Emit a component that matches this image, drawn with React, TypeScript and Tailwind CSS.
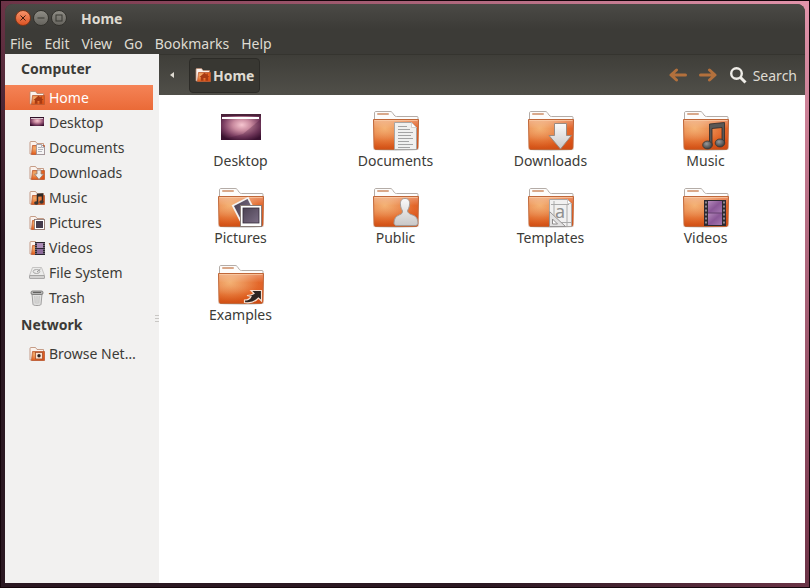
import type { ReactNode } from "react"

type Kind =
  | "home"
  | "desktop"
  | "documents"
  | "downloads"
  | "music"
  | "pictures"
  | "videos"
  | "public"
  | "templates"
  | "examples"
  | "filesystem"
  | "trash"
  | "network"

const menus = ["File", "Edit", "View", "Go", "Bookmarks", "Help"]

const computer: { label: string; kind: Kind }[] = [
  { label: "Home", kind: "home" },
  { label: "Desktop", kind: "desktop" },
  { label: "Documents", kind: "documents" },
  { label: "Downloads", kind: "downloads" },
  { label: "Music", kind: "music" },
  { label: "Pictures", kind: "pictures" },
  { label: "Videos", kind: "videos" },
  { label: "File System", kind: "filesystem" },
  { label: "Trash", kind: "trash" },
]

const network: { label: string; kind: Kind }[] = [{ label: "Browse Net…", kind: "network" }]

const files: { label: string; kind: Kind }[] = [
  { label: "Desktop", kind: "desktop" },
  { label: "Documents", kind: "documents" },
  { label: "Downloads", kind: "downloads" },
  { label: "Music", kind: "music" },
  { label: "Pictures", kind: "pictures" },
  { label: "Public", kind: "public" },
  { label: "Templates", kind: "templates" },
  { label: "Videos", kind: "videos" },
  { label: "Examples", kind: "examples" },
]

// Gradients shared by every icon on the page
function Gradients() {
  return (
    <svg className="absolute size-0" aria-hidden="true">
      <defs>
        <radialGradient id="folder" cx="0.25" cy="0.3" r="0.85">
          <stop offset="0" stopColor="#f3ad6c" />
          <stop offset="0.4" stopColor="#ea8748" />
          <stop offset="0.75" stopColor="#e2601f" />
          <stop offset="1" stopColor="#dc5218" />
        </radialGradient>
        <linearGradient id="shine" x1="0" y1="0" x2="0" y2="1">
          <stop offset="0" stopColor="#fff" stopOpacity="0.35" />
          <stop offset="0.3" stopColor="#fff" stopOpacity="0.05" />
          <stop offset="0.7" stopColor="#d04a10" stopOpacity="0.15" />
          <stop offset="1" stopColor="#b8400e" stopOpacity="0.4" />
        </linearGradient>
        <linearGradient id="silver" x1="0" y1="0" x2="0" y2="1">
          <stop offset="0" stopColor="#fafafa" />
          <stop offset="1" stopColor="#c9c8c8" />
        </linearGradient>
        <linearGradient id="photo" x1="0" y1="0" x2="1" y2="1">
          <stop offset="0" stopColor="#4b4152" />
          <stop offset="1" stopColor="#7c6e86" />
        </linearGradient>
        <linearGradient id="film" x1="0" y1="0" x2="1" y2="1">
          <stop offset="0" stopColor="#b58abb" />
          <stop offset="0.5" stopColor="#8a5797" />
          <stop offset="1" stopColor="#a578b0" />
        </linearGradient>
        <radialGradient id="note" cx="0.4" cy="0.35" r="0.6">
          <stop offset="0" stopColor="#999" />
          <stop offset="1" stopColor="#444" />
        </radialGradient>
        <radialGradient id="wallpaper" cx="0.52" cy="0.42" r="0.65">
          <stop offset="0" stopColor="#f6c6d0" />
          <stop offset="0.35" stopColor="#c98a9f" />
          <stop offset="0.7" stopColor="#7d4063" />
          <stop offset="1" stopColor="#3a122f" />
        </radialGradient>
      </defs>
    </svg>
  )
}

function Emblem({ kind }: { kind: Kind }) {
  switch (kind) {
    case "documents":
      return (
        <g>
          <path d="M22.500 15.500h17l5 5v22h-22z" fill="#f0f0ef" stroke="#a8a5a3" />
          <path d="M39.500 15.500v5h5z" fill="#fff" stroke="#c4c1bf" strokeWidth="0.700" />
          <path
            d="M26 19.500h9M26 22.500h12M26 25.500h15M26 28.500h13M26 31.500h15M26 34.500h11M26 37.500h15M26 40.500h12"
            stroke="#a3a3a3"
          />
        </g>
      )
    case "downloads":
      return (
        <path
          d="M27.500 16.500h12v12h5L33.500 42 22 28.500h5.500z"
          fill="url(#silver)"
          stroke="#9b8a80"
          strokeLinejoin="round"
        />
      )
    case "music":
      return (
        <g>
          <path
            d="M27.500 17l15-1.500v20.500h-2.500V20.500l-10 1v17h-2.500z"
            fill="#5a5755"
            stroke="#2e2a28"
            strokeWidth="0.800"
            strokeLinejoin="round"
          />
          <ellipse cx="25.500" cy="38" rx="4.800" ry="4" fill="url(#note)" stroke="#3a3634" strokeWidth="0.800" />
          <ellipse cx="38" cy="36" rx="4.800" ry="4" fill="url(#note)" stroke="#3a3634" strokeWidth="0.800" />
        </g>
      )
    case "pictures":
      return (
        <g>
          <rect
            x="19"
            y="17"
            width="17"
            height="17"
            fill="url(#photo)"
            stroke="#f4f2f1"
            strokeWidth="1.800"
            transform="rotate(-27 27 26)"
          />
          <rect x="23.500" y="21.500" width="21" height="21" fill="#fff" stroke="#8a7d78" />
          <rect x="26" y="24" width="16" height="15" fill="url(#photo)" stroke="#352c3a" strokeWidth="0.800" />
        </g>
      )
    case "public":
      return (
        <path
          d="M33 14.500c4 0 5 3 4.500 6.500-.3 3-1.500 4-2 6 .5 2 2 3 5 4 4 1.300 5 3.500 5.500 8 0 1.300-1 2-2 2.500H24c-1.500-.5-2-1.300-2-2.500.3-4.500 1.500-6.500 5-8 3-1 3.500-2 3.500-4-.8-2-1.800-3-2-6-.4-3.500.7-6.500 4.500-6.500z"
          fill="url(#silver)"
          stroke="#a29b98"
        />
      )
    case "templates":
      return (
        <g>
          <path d="M22.500 15.500h18l4 4v23h-22z" fill="#f1f0f0" stroke="#aaa6a4" />
          <path d="M40.500 15.500v4h4z" fill="#fff" stroke="#b9b5b3" strokeWidth="0.700" />
          <path d="M27 17v22M40 20v22M24 20.500h18M27 38.500h17" stroke="#aaa" />
          <path d="M22.500 27.500v15h16z" fill="#e2e1e1" stroke="#979494" />
          <path d="M25.500 35v5h5z" fill="#fff" stroke="#8e8b8b" />
          <text x="28" y="34" fontSize="18" fontFamily="Noto Sans" fill="#8e8e8e">
            a
          </text>
        </g>
      )
    case "videos":
      return (
        <g>
          <rect x="22" y="16" width="22" height="26" fill="#2d2930" />
          <rect x="26" y="17" width="14" height="12" fill="url(#film)" />
          <rect x="26" y="29" width="14" height="12" fill="url(#film)" />
          <path d="M26 29h14" stroke="#64406f" />
          <path d="M24 17.500v24M42 17.500v24" stroke="#aea7b0" strokeWidth="1.500" strokeDasharray="2 2" />
        </g>
      )
    case "examples":
      return (
        <path
          d="M34 29.500h10.500V40l-3-3c-4 4.500-8 5.500-14 4.500v-2.500c4 0 5.500-1 6.500-3.500l-4-1c3 0 5-.5 7-2z"
          fill="#2b2421"
          stroke="#f8dfcf"
          strokeWidth="1.200"
        />
      )
    default:
      return null
  }
}

function LargeIcon({ kind }: { kind: Kind }) {
  if (kind === "desktop") {
    return (
      <svg viewBox="0 0 48 48" className="size-12" aria-hidden="true">
        <rect x="4" y="7" width="40" height="26" fill="url(#wallpaper)" />
        <path d="M4 33l22-6 18-15v21z" fill="#3c1033" opacity="0.250" />
        <rect x="4" y="7" width="40" height="2" fill="#4a2239" />
        <rect x="5" y="10" width="37" height="2" fill="#fff" />
      </svg>
    )
  }
  return (
    <svg viewBox="0 0 48 48" className="size-12" aria-hidden="true">
      <ellipse cx="24" cy="42.500" rx="23" ry="1.500" fill="#000" opacity="0.150" />
      <path
        d="M2.500 14V6c0-1 .5-1.500 1.500-1.500h14c1.500 0 2 .5 3 2l1 1.500c.8 1 1.300 1.500 2.500 1.500H45c.8 0 1 .3 1 1V15z"
        fill="#fdfcfb"
        stroke="#b4aca7"
      />
      <rect x="5" y="6" width="12" height="2" rx="1" fill="#d9a88a" />
      <path d="M1.500 12.500h45l-.5 28c0 1.300-.7 2-2 2H4c-1.300 0-2-.7-2-2z" fill="url(#folder)" stroke="#c0683a" />
      <path d="M2 13h44l-.4 27.500c0 1-.4 1.500-1.400 1.500H4c-1 0-1.400-.5-1.400-1.500z" fill="url(#shine)" />
      <path d="M2.500 13.500h43" stroke="#fbcda8" strokeOpacity="0.700" />
      <Emblem kind={kind} />
    </svg>
  )
}

function SmallFolder({ children }: { children?: ReactNode }) {
  return (
    <>
      <path d="M1 14V2.500c0-.6.300-1 1-1h4.500L8 3.500h6.500V14z" fill="#fbf3ee" stroke="#b9866c" strokeWidth="0.800" />
      <path d="M3.500 5.500h12v9H2.500z" fill="url(#folder)" stroke="#bb5b32" strokeWidth="0.800" />
      {children}
    </>
  )
}

function SmallIcon({ kind }: { kind: Kind }) {
  return (
    <svg viewBox="0 0 16 16" className="size-4 shrink-0" aria-hidden="true">
      {kind === "home" && (
        <SmallFolder>
          <path d="M9.500 5.800L4.500 10h1.300v3.800h2.700V11h2v2.800h2.700V10h1.300l-1.700-1.500V6.500h-1.200v1z" fill="#a83a13" />
        </SmallFolder>
      )}
      {kind === "desktop" && (
        <>
          <rect x="1" y="2" width="14" height="9" fill="url(#wallpaper)" />
          <rect x="1" y="2" width="14" height="1" fill="#2f1027" />
          <rect x="2" y="3" width="12" height="1" fill="#dcc9d3" />
        </>
      )}
      {kind === "documents" && (
        <SmallFolder>
          <path d="M7.500 4.500h5l3 3v7h-8z" fill="#f6f5f5" stroke="#94909a" strokeWidth="0.800" />
          <path d="M9 7.500h3M9 9.500h5M9 11.500h4M12.500 4.500v3h3" fill="none" stroke="#a5a5ac" strokeWidth="0.800" />
        </SmallFolder>
      )}
      {kind === "downloads" && (
        <SmallFolder>
          <path d="M8 5h4v4h2.500L10 14.500 5.500 9H8z" fill="#eeedec" stroke="#93796c" strokeWidth="0.800" />
        </SmallFolder>
      )}
      {kind === "music" && (
        <SmallFolder>
          <path d="M8.500 13V4.500l5-.5v8M8.500 6l5-.5" fill="none" stroke="#2e2b29" strokeWidth="1.500" />
          <ellipse cx="7.300" cy="13" rx="2.200" ry="1.800" fill="#3a3836" />
          <ellipse cx="12.500" cy="12" rx="2.200" ry="1.800" fill="#3a3836" />
        </SmallFolder>
      )}
      {kind === "pictures" && (
        <SmallFolder>
          <rect x="5.500" y="4.500" width="10" height="10" fill="#fff" stroke="#84706b" strokeWidth="0.800" />
          <rect x="7" y="6" width="7" height="7" fill="#443a4b" />
        </SmallFolder>
      )}
      {kind === "videos" && (
        <SmallFolder>
          <rect x="6" y="2" width="10" height="13" fill="#2b2530" />
          <rect x="8" y="3" width="6" height="5" fill="#aa8bb5" />
          <rect x="8" y="9" width="6" height="5" fill="#8d6b9c" />
          <path d="M7 3v12M15 3v12" stroke="#aaa3ad" strokeDasharray="1 1" />
        </SmallFolder>
      )}
      {kind === "network" && (
        <SmallFolder>
          <rect x="6.500" y="6.500" width="7" height="6.500" fill="#fbe2d1" stroke="#a34f2c" strokeWidth="0.800" />
          <circle cx="10" cy="9.700" r="1.700" fill="#2e2422" />
        </SmallFolder>
      )}
      {kind === "filesystem" && (
        <>
          <path d="M3.500 2.500h9l3 8h-15z" fill="#ebebea" stroke="#bab9b8" strokeWidth="0.800" />
          <rect x="0.500" y="10.500" width="15" height="3" rx="0.500" fill="#d2d1d0" stroke="#9c9b9a" strokeWidth="0.800" />
          <ellipse cx="7.500" cy="6.500" rx="3.300" ry="2" fill="none" stroke="#a9a8a7" />
          <path d="M8 7l3.500-3" stroke="#969594" />
        </>
      )}
      {kind === "trash" && (
        <>
          <path d="M3 4l1 10.500c.1.500 1.500 1 4 1s3.900-.5 4-1L13 4z" fill="#e2e2e1" stroke="#8d8c8b" strokeWidth="0.800" />
          <path d="M5.800 6l.4 7.500M8 6v8M10.200 6l-.4 7.500" stroke="#c2c1c0" />
          <rect x="2" y="1" width="12" height="3.500" rx="1.500" fill="#b6b5b4" stroke="#6f6e6d" strokeWidth="0.800" />
          <path d="M4 2.500h8" stroke="#636261" />
        </>
      )}
    </svg>
  )
}

function WindowButton({ label, close, children }: { label: string; close?: boolean; children: ReactNode }) {
  return (
    <button
      aria-label={label}
      className={
        close
          ? "size-4 rounded-full border border-[#7c3517] bg-linear-to-b from-[#f79269] to-[#dd5321] text-[#3f1c0e]"
          : "size-4 rounded-full border border-[#33322d] bg-linear-to-b from-[#8f8d86] to-[#66645e] text-[#393833]"
      }
    >
      <svg viewBox="0 0 14 14" className="size-full" fill="none" stroke="currentColor" aria-hidden="true">
        {children}
      </svg>
    </button>
  )
}

function Places({ title, items }: { title: string; items: { label: string; kind: Kind }[] }) {
  return (
    <section>
      <h2 className="h-[31px] pl-4 leading-[30px] font-bold">{title}</h2>
      <ul className="pr-1.5">
        {items.map((item) => (
          <li key={item.label}>
            <a
              href="#"
              className={
                item.kind === "home"
                  ? "flex h-[25px] items-center gap-1 bg-linear-to-b from-[#f58356] to-[#ea6a37] pl-6 text-white"
                  : "flex h-[25px] items-center gap-1 pl-6"
              }
            >
              <SmallIcon kind={item.kind} />
              {item.label}
            </a>
          </li>
        ))}
      </ul>
    </section>
  )
}

export default function App() {
  return (
    <div className="flex min-h-screen border border-[#14040a] bg-linear-to-tr from-[#2b1822] from-30% via-[#7c3b50] via-55% to-[#e294ab] px-1 pt-[3px] pb-1 font-['Noto_Sans',sans-serif] text-[14px] text-[#3c3b37]">
      <Gradients />
      <div className="flex min-w-0 flex-1 flex-col rounded-t-lg bg-[#3c3b37]">
        <header className="rounded-t-lg bg-linear-to-b from-[#4b4a46] to-[#3c3b37] to-50% text-[#dfdbd2]">
          <div className="flex h-7 items-center gap-0.5 pl-2.5">
            <WindowButton label="Close" close>
              <path d="M4.500 4.500l5 5M9.500 4.500l-5 5" />
            </WindowButton>
            <WindowButton label="Minimize">
              <path d="M3.500 7h7" />
            </WindowButton>
            <WindowButton label="Maximize">
              <rect x="4" y="4" width="6" height="6" />
            </WindowButton>
            <h1 className="pl-3 font-bold">Home</h1>
          </div>
          <nav className="flex h-[22px] items-center gap-3 pl-[5px]">
            {menus.map((menu) => (
              <button key={menu}>{menu}</button>
            ))}
          </nav>
        </header>

        <div className="flex flex-1">
          <aside className="relative w-[154px] shrink-0 bg-[#f2f1f0]">
            <Places title="Computer" items={computer} />
            <Places title="Network" items={network} />
            <div className="absolute top-[261px] right-0 flex w-1 flex-col gap-0.5">
              <span className="h-px bg-[#c9c7c4]" />
              <span className="h-px bg-[#c9c7c4]" />
              <span className="h-px bg-[#c9c7c4]" />
            </div>
          </aside>

          <main className="flex min-w-0 flex-1 flex-col bg-white">
            <div className="flex h-[41px] items-center border-t border-[#35342f] bg-linear-to-b from-[#3f3e39] to-[#504f49] pr-2 text-[#dfdbd2]">
              <button aria-label="Previous folders" className="flex h-full w-[30px] items-center justify-center pr-1">
                <svg viewBox="0 0 6 8" className="h-2 w-1.5" fill="currentColor" aria-hidden="true">
                  <path d="M5 1v6L1 4z" />
                </svg>
              </button>
              <button className="flex h-[35px] items-center gap-0.5 rounded-sm border border-[#2c2b27] bg-[#383732] px-[5px] font-bold">
                <SmallIcon kind="home" />
                Home
              </button>
              <div className="ml-auto flex items-center">
                <button aria-label="Back">
                  <svg viewBox="0 0 18 14" className="h-3.5 w-[18px]" fill="none" stroke="#b3703c" strokeWidth="3" strokeLinecap="round" strokeLinejoin="round" aria-hidden="true">
                    <path d="M7.500 2L2 7l5.500 5M3 7h13.500" />
                  </svg>
                </button>
                <button aria-label="Forward" className="ml-3">
                  <svg viewBox="0 0 18 14" className="h-3.5 w-[18px]" fill="none" stroke="#b3703c" strokeWidth="3" strokeLinecap="round" strokeLinejoin="round" aria-hidden="true">
                    <path d="M10.500 2L16 7l-5.500 5M15 7H1.500" />
                  </svg>
                </button>
                <button className="ml-3 flex items-center gap-1.5">
                  <svg viewBox="0 0 18 18" className="size-[18px]" fill="none" stroke="#efede8" strokeWidth="2.400" aria-hidden="true">
                    <circle cx="7.500" cy="7.500" r="5.300" />
                    <path d="M11.500 11.500l5 5" strokeWidth="3" />
                  </svg>
                  Search
                </button>
              </div>
            </div>

            <ul className="grid grid-cols-[repeat(auto-fill,155px)] pt-3 pl-1">
              {files.map((file) => (
                <li key={file.label} className="h-[77px]">
                  <a href="#" className="flex flex-col items-center">
                    <LargeIcon kind={file.kind} />
                    <span className="leading-3">{file.label}</span>
                  </a>
                </li>
              ))}
            </ul>
          </main>
        </div>
      </div>
    </div>
  )
}
